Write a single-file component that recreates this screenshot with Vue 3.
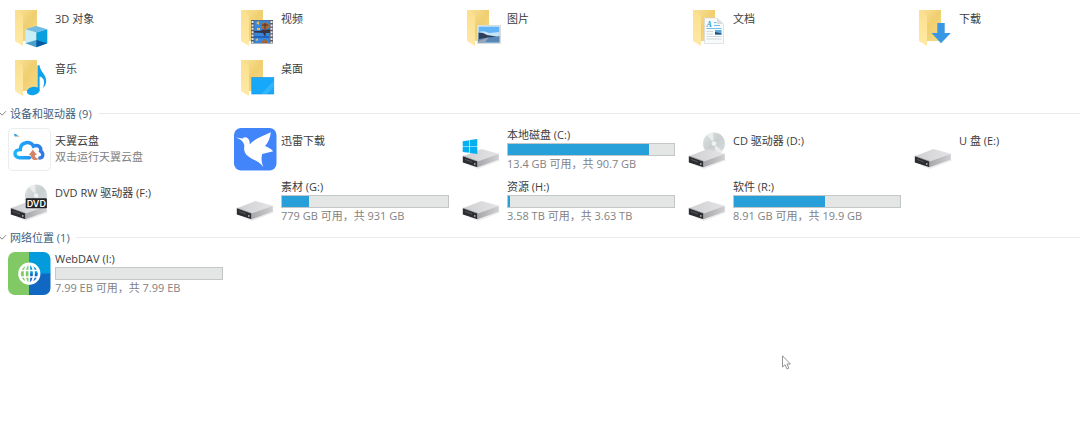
<template>
  <main class="explorer">
    <section v-for="group in groups" :key="group.id" class="group" :aria-label="group.label">
      <button v-if="group.title" class="group-header" :aria-expanded="!closed[group.id]" @click="toggle(group.id)">
        <svg class="chevron" :class="{ shut: closed[group.id] }" width="7" height="7" viewBox="0 0 7 7">
          <path d="M0 3 L2 5.2 L6 1.2" fill="none" stroke="#888" stroke-width="1" />
        </svg>
        <span>{{ group.title }} ({{ group.count }})</span>
        <span class="rule"></span>
      </button>

      <ul v-if="!closed[group.id]" class="items">
        <li v-for="item in group.items" :key="item.name">
          <button class="item" :class="{ selected: selected === item.name }" @click="selected = item.name">
            <svg class="icon" viewBox="0 0 43 43" aria-hidden="true">
              <!-- Dossiers -->
              <g v-if="group.id === 'folders'">
                <path d="M7 4 H29 V35 H12 Z" fill="url(#folder-back)" />
                <path d="M7 4 L14 8.5 Q15 9.2 15 10.5 V40 L7.6 35.6 Q7 35.2 7 34 Z" fill="url(#folder-front)" />
              </g>

              <g v-if="item.icon === 'cube'">
                <path d="M28.3 20 L39.3 23.3 L28.3 26.5 L17.3 23.3 Z" fill="#6fbde6" />
                <path d="M17.3 23.3 L28.3 26.5 V41.3 L17.3 37.3 Z" fill="#c8eff9" />
                <path d="M39.3 23.3 L28.3 26.5 V41.3 L39.3 37.3 Z" fill="#0a9fdf" />
                <path d="M28.3 34 V41.3 L17.3 37.3 Z" fill="#4a9fcb" />
                <path d="M28.3 34 V41.3 L39.3 37.3 Z" fill="#0759a3" />
              </g>

              <g v-else-if="item.icon === 'video'">
                <rect x="17" y="14" width="22" height="23.5" fill="#5b5e66" />
                <path d="M18.5 15 V37 M37.5 15 V37" stroke="#e4e6ea" stroke-width="2" stroke-dasharray="2 1.4" />
                <rect x="20.3" y="14.6" width="15.4" height="22.4" fill="#3787dc" />
                <path d="M20 25 H26 L29 23.5 H36 V27 H32 L31 31 L29 27 L20 26.5 Z" fill="#3c3340" />
                <ellipse cx="31" cy="20" rx="4" ry="3.4" fill="#a66a3a" />
                <path d="M28 19 H34 M31 17 V23" stroke="#542f28" stroke-width="1" />
                <path d="M27 37 Q31 29.5 34 37 Z" fill="#a86435" />
                <path d="M22 17 L25 15 V19 Z M21 34 L24 32 V35 Z M23 22 H26 V24 H23 Z" fill="#e8bd61" />
                <path d="M20 31 H35" stroke="#1e58b4" stroke-width="1.5" />
              </g>

              <g v-else-if="item.icon === 'picture'">
                <rect x="17.5" y="19.5" width="23" height="18" fill="#fff" stroke="#dcdcdc" />
                <rect x="18.5" y="20.5" width="21" height="16" fill="#61b4f6" />
                <path d="M18.5 26 Q24 24 29 27 L39.5 26 V31 H18.5 Z" fill="#c4e3f7" />
                <path d="M18.5 26.5 L23 27 L27 29 L36 30.5 V32 L18.5 36.5 Z" fill="#2d3e58" />
                <path d="M18.5 33 L39.5 30 V36.5 H18.5 Z" fill="#5787b4" />
                <path d="M18.5 35 L29 31 L25 36.5 H18.5 Z" fill="#9aa4b4" />
              </g>

              <g v-else-if="item.icon === 'document'">
                <path d="M18.5 12 H31 L37.5 18 V37.5 H18.5 Z" fill="#f8fafb" stroke="#d4d9dc" stroke-width="0.7" />
                <path d="M31 12 V18 H37.5 Z" fill="#d9dee2" />
                <text x="20.5" y="20.5" font-family="Liberation Serif, serif" font-size="8" font-weight="700" font-style="italic" fill="#2e9bdc">A</text>
                <path d="M20.5 22.5 H35.5 M28 16.5 H30.5 M28 19.5 H34" stroke="#71bfe8" stroke-width="1" />
                <path d="M20.5 25.5 H27 M20.5 28 H27 M20.5 30.5 H35.5 M20.5 33 H35.5" stroke="#c8d1d8" stroke-width="0.8" />
                <rect x="29" y="24" width="6.5" height="4.5" fill="#59a9dd" />
                <path d="M29 26 L35.5 27.5 V28.5 H29 Z" fill="#244a70" />
              </g>

              <path v-else-if="item.icon === 'download'" d="M25.3 17 H32.7 V27 H38.8 L29 37.3 L19.5 27 H25.3 Z" fill="#3998e3" />

              <g v-else-if="item.icon === 'music'" fill="#0ca2ed">
                <ellipse cx="25.2" cy="35" rx="6.4" ry="4.2" transform="rotate(-12 25.2 35)" />
                <path d="M29.5 9.3 H31.5 C32.5 16.5 38.2 18.5 38.2 25 C38.2 28.4 36.7 30.6 35 32 C37.2 26 36.2 21.5 31.6 20.5 V35 H29.5 Z" />
              </g>

              <g v-else-if="item.icon === 'desktop'">
                <rect x="17.8" y="21.5" width="22" height="16.5" fill="#18a8fa" stroke="#1390db" stroke-width="0.6" />
                <path d="M27 38 L39.8 25 V31 L33 38 Z" fill="#32b5fb" />
              </g>

              <!-- Applications -->
              <g v-else-if="item.icon === 'tianyi'">
                <rect x="0.5" y="0.5" width="42" height="42" rx="4" fill="#fefefe" stroke="#e8edf0" />
                <path d="M21.5 29.8 H12 C5.3 29.8 5.3 21.6 12.3 21.6 C12.3 13.6 23.2 12.4 25.4 18.2 C30 16 33.6 19.2 32.6 23 C36 25.4 35.2 29.6 31.8 30" fill="none" stroke="url(#cloud)" stroke-width="3.4" stroke-linecap="round" />
                <path d="M24.8 21.8 L29 27 H26.8 C27 30 28.8 30.8 31.8 30.2 C27.8 33.6 22.6 32 22.6 27 H20.8 Z" fill="#d48466" />
                <path d="M5.8 5.8 L8.5 6.2 L9.7 8.6 L6.8 8.4 Z" fill="#35a3da" />
                <path d="M9 7.5 L10.8 8 L10 9.3" fill="none" stroke="#f0a266" stroke-width="0.8" />
              </g>

              <g v-else-if="item.icon === 'xunlei'">
                <rect width="42.5" height="42.5" rx="7" fill="#4285fb" />
                <path d="M2 9.6 L8.5 10.4 C11 8.2 14.7 9.7 15.4 13 L15.8 16.6 C20 10.8 29 8.2 36.8 4.3 C36.3 10 34.2 14.7 31 18 C34 19 37 21 39.2 23.2 L28.2 26 C27 29.5 27.4 34.4 29.3 39 C25 32.8 18.5 32 14.2 28.3 C9.8 25 9.8 20.4 10.4 17.5 C9.7 14 7 11.5 2 9.6 Z" fill="#fff" />
              </g>

              <g v-else-if="item.icon === 'webdav'">
                <g clip-path="url(#tile)">
                  <rect width="21.3" height="43" fill="#80c965" />
                  <rect x="21" width="22" height="22" fill="#029cdc" />
                  <rect x="21" y="21.6" width="22" height="22" fill="#1168c3" />
                </g>
                <g fill="none" stroke="#fff" stroke-width="2">
                  <circle cx="21.3" cy="21.7" r="9.8" stroke-width="2.6" />
                  <ellipse cx="21.3" cy="21.7" rx="4.6" ry="9.8" />
                  <path d="M21.3 12 V31.5 M12.5 18.5 H30 M12.5 25 H30" stroke-width="1.7" />
                </g>
              </g>

              <!-- Lecteurs -->
              <g v-else>
                <g v-if="item.icon === 'cd' || item.icon === 'dvd'">
                  <circle cx="28" cy="15.5" r="11" fill="url(#disc)" />
                  <path d="M28 15.5 L21 7 A11 11 0 0 1 27 4.6 Z M28 15.5 L36 23 A11 11 0 0 1 30 26.3 Z" fill="#fff" opacity="0.55" />
                  <circle cx="28" cy="15.5" r="2.8" fill="#eef1f1" stroke="#c0c5c6" stroke-width="0.6" />
                </g>
                <path d="M8 37 L18 41 L40 32.5 L38 30 Z" fill="#ececee" />
                <path d="M3.3 28 L21.5 21 L38.8 25.8 L17.5 33.5 Z" fill="url(#drive-top)" />
                <path d="M17.5 33.5 L38.8 25.8 V31.5 L17.5 39.3 Z" fill="url(#drive-side)" />
                <path d="M2.8 28 L17.5 33.3 V39.3 L2.8 34.4 Z" fill="#2c2d31" />
                <path d="M3 28 L17.5 33.3 V39" fill="none" stroke="#a2a3a7" stroke-width="0.7" />
                <path d="M5 31.4 L12 34" stroke="#606267" stroke-width="0.8" />
                <rect x="14.2" y="35.2" width="1.2" height="1.5" fill="#dfe3e5" />
                <path v-if="item.icon === 'windows'" d="M2.7 13.2 L9.3 12.3 V18.2 H2.7 Z M9.9 12.1 L17.3 11 V18.2 H9.9 Z M2.7 18.8 H9.3 V24.8 L2.7 23.9 Z M9.9 18.8 H17.3 V26 L9.9 25 Z" fill="#05aff0" />
                <g v-if="item.icon === 'dvd'">
                  <rect x="17.7" y="18.2" width="21.2" height="10" rx="1" fill="#202124" />
                  <text x="28.3" y="26.5" text-anchor="middle" font-family="Inter, sans-serif" font-size="9" font-weight="600" fill="#fff">DVD</text>
                </g>
              </g>
            </svg>

            <span class="info" :class="{ 'with-bar': item.used !== undefined }">
              <span class="name">{{ item.name }}</span>
              <span v-if="item.used !== undefined" class="bar">
                <span class="fill" :style="{ width: item.used + '%' }"></span>
              </span>
              <span v-if="item.detail" class="detail">{{ item.detail }}</span>
            </span>
          </button>
        </li>
      </ul>
    </section>

    <svg class="pointer" width="9" height="15" viewBox="0 0 9 15" aria-hidden="true">
      <path d="M0.5 0.8 V12 L3 9.8 L5 14 L6.8 13.2 L5 9 H8.4 Z" fill="#fff" stroke="#888" stroke-width="0.9" />
    </svg>

    <!-- Dégradés partagés -->
    <svg class="defs" width="0" height="0" aria-hidden="true">
      <defs>
        <linearGradient id="folder-back" x1="0" y1="0" x2="1" y2="1">
          <stop offset="0" stop-color="#fae39b" />
          <stop offset="0.5" stop-color="#f0cf70" />
          <stop offset="1" stop-color="#f6da86" />
        </linearGradient>
        <linearGradient id="folder-front" x1="0" y1="0" x2="0" y2="1">
          <stop offset="0" stop-color="#fbdf8d" />
          <stop offset="1" stop-color="#ffe9a6" />
        </linearGradient>
        <linearGradient id="cloud">
          <stop offset="0" stop-color="#18b4fb" />
          <stop offset="1" stop-color="#2f79e8" />
        </linearGradient>
        <linearGradient id="disc" x1="0" y1="0" x2="1" y2="1">
          <stop offset="0" stop-color="#dfe3e3" />
          <stop offset="0.5" stop-color="#c9cfd0" />
          <stop offset="1" stop-color="#d9dddd" />
        </linearGradient>
        <linearGradient id="drive-top">
          <stop offset="0" stop-color="#d0d0d3" />
          <stop offset="1" stop-color="#e4e4e7" />
        </linearGradient>
        <linearGradient id="drive-side">
          <stop offset="0" stop-color="#a7a7ab" />
          <stop offset="1" stop-color="#d0d0d3" />
        </linearGradient>
        <clipPath id="tile">
          <rect width="42.5" height="43" rx="7" />
        </clipPath>
      </defs>
    </svg>
  </main>
</template>

<script setup>
import { reactive, ref } from 'vue';

const selected = ref('');
const closed = reactive({});

const groups = [
  {
    id: 'folders',
    items: [
      { name: '3D 对象', icon: 'cube' },
      { name: '视频', icon: 'video' },
      { name: '图片', icon: 'picture' },
      { name: '文档', icon: 'document' },
      { name: '下载', icon: 'download' },
      { name: '音乐', icon: 'music' },
      { name: '桌面', icon: 'desktop' },
    ],
  },
  {
    id: 'devices',
    title: '设备和驱动器',
    count: 9,
    items: [
      { name: '天翼云盘', icon: 'tianyi', detail: '双击运行天翼云盘' },
      { name: '迅雷下载', icon: 'xunlei' },
      { name: '本地磁盘 (C:)', icon: 'windows', used: 85, detail: '13.4 GB 可用，共 90.7 GB' },
      { name: 'CD 驱动器 (D:)', icon: 'cd' },
      { name: 'U 盘 (E:)', icon: 'drive' },
      { name: 'DVD RW 驱动器 (F:)', icon: 'dvd' },
      { name: '素材 (G:)', icon: 'drive', used: 16, detail: '779 GB 可用，共 931 GB' },
      { name: '资源 (H:)', icon: 'drive', used: 1, detail: '3.58 TB 可用，共 3.63 TB' },
      { name: '软件 (R:)', icon: 'drive', used: 55, detail: '8.91 GB 可用，共 19.9 GB' },
    ],
  },
  {
    id: 'network',
    title: '网络位置',
    count: 1,
    items: [
      { name: 'WebDAV (I:)', icon: 'webdav', used: 0, detail: '7.99 EB 可用，共 7.99 EB' },
    ],
  },
];

const toggle = (id) => {
  closed[id] = !closed[id];
};
</script>

<style>
body {
  background: #fff;
}
</style>

<style scoped>
.explorer {
  position: relative;
  min-height: 100vh;
  box-sizing: border-box;
  padding-top: 6px;
  overflow: hidden;
  font-family: "Open Sans", "Noto Sans CJK SC", sans-serif;
  font-size: 11px;
  line-height: 15px;
  color: #3c3c3c;
}

button {
  border: none;
  padding: 0;
  background: transparent;
  font: inherit;
  color: inherit;
  text-align: left;
}

/* En-tête de groupe */
.group-header {
  display: flex;
  align-items: center;
  width: 100%;
  height: 21px;
  margin: 4px 0;
  color: #3f5f80;
  white-space: nowrap;
}

.chevron {
  margin-right: 3px;
}

.chevron.shut {
  transform: rotate(-90deg);
}

.rule {
  flex: 1;
  height: 1px;
  margin-left: 6px;
  background: #e8eaeb;
}

/* Grille des éléments */
.items {
  display: grid;
  grid-template-columns: repeat(5, minmax(226px, 1fr));
  row-gap: 9px;
  margin: 0;
  padding: 0 0 0 8px;
  list-style: none;
}

.group:first-child .items {
  row-gap: 7px;
}

.item {
  display: flex;
  align-items: flex-start;
  gap: 4px;
  width: calc(100% - 11px);
}

.item:hover,
.item.selected {
  background: #e5f3ff;
}

.icon {
  flex: none;
  width: 43px;
  height: 43px;
}

.info {
  display: flex;
  flex: 1;
  flex-direction: column;
  min-width: 0;
  padding-top: 6px;
  white-space: nowrap;
}

.info.with-bar {
  padding-top: 0;
}

.name {
  padding-bottom: 2px;
  line-height: 13px;
}

.bar {
  display: flex;
  height: 13px;
  box-sizing: border-box;
  border: 1px solid #c3c7c7;
  background: #e4e6e6;
}

.fill {
  background: #27a0da;
}

.detail {
  color: #828282;
}

.pointer {
  position: absolute;
  top: 355px;
  left: 782px;
}

.defs {
  position: absolute;
}
</style>
